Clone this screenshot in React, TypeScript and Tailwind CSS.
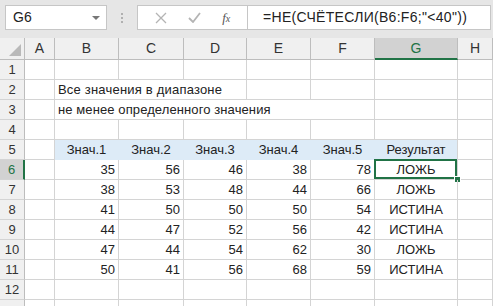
import React from "react";

// ── Data ───────────────────────────────────────────────────────────────────────
const COLS = ["A", "B", "C", "D", "E", "F", "G", "H"];
const WIDTHS = ["w-[30px]", "w-[64px]", "w-[65px]", "w-[63px]", "w-[64px]", "w-[64px]", "w-[83px]", "flex-1"];

const values: number[][] = [
  [35, 56, 46, 38, 78],
  [38, 53, 48, 44, 66],
  [41, 50, 50, 50, 54],
  [44, 47, 52, 56, 42],
  [47, 44, 54, 62, 30],
  [50, 41, 56, 68, 59],
];
const results = ["ЛОЖЬ", "ЛОЖЬ", "ИСТИНА", "ИСТИНА", "ЛОЖЬ", "ИСТИНА"];

const font = { fontFamily: '"Liberation Sans", Arial, sans-serif' };

// ── Cells ──────────────────────────────────────────────────────────────────────
function Cell({
  col,
  children,
  className = "",
}: {
  col: number;
  children?: React.ReactNode;
  className?: string;
}) {
  return (
    <div
      className={`${WIDTHS[col]} shrink-0 h-full border-r border-b border-[#d4d4d4] flex items-center text-[13px] text-[#222] ${className}`}
    >
      {children}
    </div>
  );
}

function RowHead({ n, active }: { n?: number; active?: boolean }) {
  return (
    <div
      className={`w-[25px] shrink-0 h-full border-b border-[#d4d4d4] flex items-center justify-center text-[13px] ${
        active
          ? "bg-[#d2d2d2] text-[#217346] border-r-2 border-r-[#217346]"
          : "bg-[#f0f0f0] text-[#333] border-r border-r-[#bdbdbd]"
      }`}
    >
      {n}
    </div>
  );
}

function Row({ n, children, active }: { n?: number; children?: React.ReactNode; active?: boolean }) {
  return (
    <div className="flex h-[20px]">
      <RowHead n={n} active={active} />
      {children ?? COLS.map((_, i) => <Cell key={i} col={i} />)}
    </div>
  );
}

// ── Main ───────────────────────────────────────────────────────────────────────
export default function App() {
  return (
    <div className="w-[493px] h-[306px] overflow-hidden bg-white" style={font}>
      {/* Formula bar */}
      <div className="h-[38px] bg-[#e6e6e6] flex items-start pt-[5px] pl-[5px]">
        <div className="w-[102px] h-[25px] bg-white border border-[#c6c6c6] flex items-center justify-between pl-[7px] pr-[6px]">
          <span className="text-[14px] text-[#222]">G6</span>
          <span className="w-0 h-0 border-l-[4px] border-r-[4px] border-t-[4px] border-l-transparent border-r-transparent border-t-[#777]" />
        </div>
        <div className="w-[30px] h-[25px] flex flex-col items-center justify-center gap-[2px]">
          <span className="w-[2px] h-[2px] bg-[#b0b0b0]" />
          <span className="w-[2px] h-[2px] bg-[#b0b0b0]" />
          <span className="w-[2px] h-[2px] bg-[#b0b0b0]" />
        </div>
        <div className="w-[111px] h-[25px] bg-white border border-[#c6c6c6] flex items-center justify-around px-[6px]">
          <svg width="12" height="12" viewBox="0 0 12 12">
            <path d="M1 1 L11 11 M11 1 L1 11" stroke="#b4b4b4" strokeWidth="1.3" />
          </svg>
          <svg width="13" height="11" viewBox="0 0 13 11">
            <path d="M1 6 L5 10 L12 1" stroke="#b4b4b4" strokeWidth="1.8" fill="none" />
          </svg>
          <span className="text-[13px] italic text-[#555]" style={{ fontFamily: '"Liberation Serif", serif' }}>
            f<span className="text-[10px]">x</span>
          </span>
        </div>
        <div className="w-[243px] h-[25px] bg-white border border-[#c6c6c6] border-l-0 flex items-center pl-[15px] text-[14px] text-[#222] tracking-[0.3px]">
          =НЕ(СЧЁТЕСЛИ(B6:F6;"&lt;40"))
        </div>
      </div>

      {/* Column headers */}
      <div className="flex h-[22px]">
        <div className="w-[25px] shrink-0 h-full bg-[#f0f0f0] border-r border-b border-[#bdbdbd] flex items-end justify-end pr-[3px] pb-[3px]">
          <svg width="12" height="12" viewBox="0 0 12 12">
            <polygon points="12,0 12,12 0,12" fill="#b9b9b9" />
          </svg>
        </div>
        {COLS.map((c, i) =>
          c === "G" ? (
            <div
              key={c}
              className={`${WIDTHS[i]} shrink-0 h-full bg-[#d2d2d2] border-r border-[#bdbdbd] border-b-2 border-b-[#217346] flex items-center justify-center text-[14px] text-[#217346]`}
            >
              {c}
            </div>
          ) : (
            <div
              key={c}
              className={`${WIDTHS[i]} shrink-0 h-full bg-[#f0f0f0] border-r border-b border-[#bdbdbd] flex items-center justify-center text-[14px] text-[#333]`}
            >
              {c}
            </div>
          )
        )}
      </div>

      {/* Sheet rows */}
      <Row n={1} />
      <Row n={2}>
        <Cell col={0} />
        <Cell col={1} className="overflow-visible whitespace-nowrap pl-[3px] border-r-0 relative z-10 tracking-[0.2px]">
          Все значения в диапазоне
        </Cell>
        {COLS.slice(2).map((_, i) => (
          <Cell key={i} col={i + 2} className={i < 1 ? "border-r-0" : ""} />
        ))}
      </Row>
      <Row n={3}>
        <Cell col={0} />
        <Cell col={1} className="overflow-visible whitespace-nowrap pl-[3px] border-r-0 relative z-10 tracking-[0.1px]">
          не менее определенного значения
        </Cell>
        {COLS.slice(2).map((_, i) => (
          <Cell key={i} col={i + 2} className={i < 3 ? "border-r-0" : ""} />
        ))}
      </Row>
      <Row n={4} />
      <Row n={5}>
        <Cell col={0} />
        {["Знач.1", "Знач.2", "Знач.3", "Знач.4", "Знач.5"].map((h, i) => (
          <Cell key={h} col={i + 1} className="bg-[#ddebf7] border-r-[#ddebf7] border-b-[#ddebf7] justify-center">
            {h}
          </Cell>
        ))}
        <Cell col={6} className="bg-[#ddebf7] border-r-[#d4d4d4] border-b-[#ddebf7] justify-center">
          Результат
        </Cell>
        <Cell col={7} />
      </Row>
      {values.map((row, r) => (
        <Row key={r} n={r + 6} active={r === 0}>
          <Cell col={0} />
          {row.map((v, i) => (
            <Cell key={i} col={i + 1} className="justify-end pr-[3px]">
              {v}
            </Cell>
          ))}
          <Cell col={6} className="justify-center relative">
            {results[r]}
            {r === 0 && (
              <>
                <span className="absolute -left-[1px] -top-[1px] right-0 bottom-0 border-2 border-[#217346]" />
                <span className="absolute -right-[4px] -bottom-[4px] w-[7px] h-[7px] bg-[#217346] border border-white" />
              </>
            )}
          </Cell>
          <Cell col={7} />
        </Row>
      ))}
      <Row n={12} />
      <Row />
    </div>
  );
}
